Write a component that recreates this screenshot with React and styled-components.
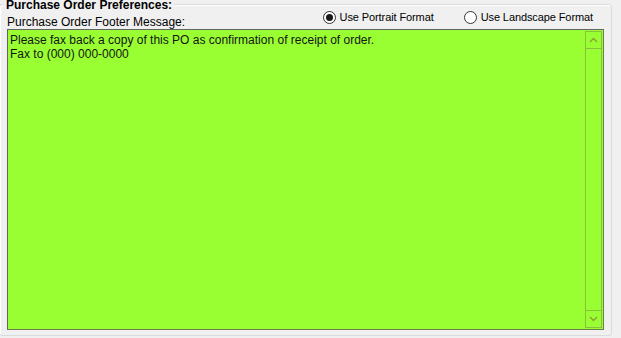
import React, { useState } from "react";
import styled, { createGlobalStyle } from "styled-components";

const GlobalStyle = createGlobalStyle`
  html, body {
    margin: 0;
    padding: 0;
    background: #f0f0f0;
    font-family: "Liberation Sans", Arial, sans-serif;
    overflow: hidden;
  }
`;

const Frame = styled.div`
  position: relative;
  box-sizing: border-box;
  height: 332px;
  margin: 4px 9px 0 -1px;
  border: 1px solid #d9dcde;
  border-radius: 3px;
  box-shadow: inset 1px 1px 0 #fff;
  display: flex;
  flex-direction: column;
`;

const Title = styled.div`
  position: absolute;
  top: -7px;
  left: 4px;
  padding: 0 2px;
  background: #f0f0f0;
  font-size: 12px;
  line-height: 14px;
  font-weight: bold;
  color: #000;
`;

const Header = styled.div`
  display: flex;
  align-items: flex-start;
  justify-content: space-between;
  height: 24px;
  padding: 0 18px 0 7px;
`;

const Label = styled.span`
  align-self: flex-end;
  font-size: 12px;
  line-height: 14px;
  color: #000;
`;

const RadioGroup = styled.div`
  display: flex;
  gap: 30px;
  margin-top: 6px;
`;

const RadioOption = styled.label`
  display: flex;
  align-items: center;
  gap: 4px;
  font-size: 11px;
  line-height: 13px;
  letter-spacing: -0.1px;
  color: #000;
  cursor: default;
`;

const Circle = styled.span`
  box-sizing: border-box;
  width: 13px;
  height: 13px;
  border-radius: 50%;
  border: 1px solid #333;
  background: #fff;
  display: flex;
  align-items: center;
  justify-content: center;

  &::after {
    content: "";
    width: 7px;
    height: 7px;
    border-radius: 50%;
    background: ${(p) => (p.$checked ? "#1a1a1a" : "transparent")};
  }
`;

const TextBox = styled.div`
  box-sizing: border-box;
  flex: 1;
  display: flex;
  margin: 0 7px 5px 7px;
  border: 1px solid #6f7a55;
  border-top-color: #646464;
  border-left-color: #646464;
  background: #99ff33;
`;

const Message = styled.div`
  flex: 1;
  padding: 3px 2px;
  font-size: 12px;
  line-height: 14px;
  color: #141414;
  white-space: pre-wrap;
`;

const ScrollBar = styled.div`
  box-sizing: border-box;
  width: 17px;
  margin: 1px 1px 1px 0;
  border: 1px solid #86c23a;
  display: flex;
  flex-direction: column;
  justify-content: space-between;
`;

const ScrollButton = styled.div`
  box-sizing: border-box;
  height: 17px;
  display: flex;
  align-items: center;
  justify-content: center;
  border-top: ${(p) => (p.$down ? "1px solid #86c23a" : "none")};
  border-bottom: ${(p) => (p.$down ? "none" : "1px solid #86c23a")};
`;

const Chevron = ({ down }) => (
  <svg width="9" height="6" viewBox="0 0 9 6">
    <polyline
      points={down ? "1,1 4.5,4.5 8,1" : "1,5 4.5,1.5 8,5"}
      fill="none"
      stroke="#8f9a3a"
      strokeWidth="1.3"
    />
  </svg>
);

const App = () => {
  const [format, setFormat] = useState("portrait");

  return (
    <>
      <GlobalStyle />
      <Frame>
        <Title>Purchase Order Preferences:</Title>
        <Header>
          <Label>Purchase Order Footer Message:</Label>
          <RadioGroup>
            <RadioOption onClick={() => setFormat("portrait")}>
              <Circle $checked={format === "portrait"} />
              Use Portrait Format
            </RadioOption>
            <RadioOption onClick={() => setFormat("landscape")}>
              <Circle $checked={format === "landscape"} />
              Use Landscape Format
            </RadioOption>
          </RadioGroup>
        </Header>
        <TextBox>
          <Message>
            {"Please fax back a copy of this PO as confirmation of receipt of order.\nFax to (000) 000-0000"}
          </Message>
          <ScrollBar>
            <ScrollButton>
              <Chevron />
            </ScrollButton>
            <ScrollButton $down>
              <Chevron down />
            </ScrollButton>
          </ScrollBar>
        </TextBox>
      </Frame>
    </>
  );
};

export default App;
